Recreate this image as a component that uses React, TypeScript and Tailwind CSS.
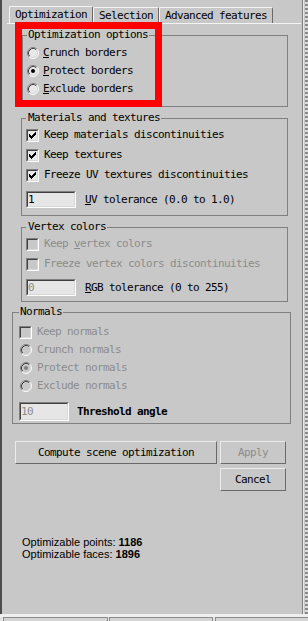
import React from "react";

const F =
  "font-['DejaVu_Sans_Mono','Liberation_Mono',monospace] text-[11px] leading-[12px] tracking-[-0.62px]";

function Radio({ on, disabled }: { on?: boolean; disabled?: boolean }) {
  const fill = disabled ? "#c8c8c8" : "#e8e8e8";
  return (
    <svg width="12" height="12" viewBox="0 0 12 12" className="shrink-0 block">
      <circle cx="6" cy="6" r="5" fill={fill} />
      <path d="M2.11 9.89 A5.5 5.5 0 0 1 9.89 2.11" stroke="#808080" fill="none" />
      <path d="M9.89 2.11 A5.5 5.5 0 0 1 2.11 9.89" stroke="#ffffff" fill="none" />
      <path d="M2.82 9.18 A4.5 4.5 0 0 1 9.18 2.82" stroke="#404040" fill="none" />
      <path d="M9.18 2.82 A4.5 4.5 0 0 1 2.82 9.18" stroke="#d8d8d8" fill="none" />
      {on && <circle cx="6" cy="6" r="2" fill={disabled ? "#808080" : "#000000"} />}
    </svg>
  );
}

function Check({ on, disabled }: { on?: boolean; disabled?: boolean }) {
  const ys = [2, 3, 4, 3, 2, 1, 0];
  return (
    <span className="w-[13px] h-[13px] shrink-0 flex border border-t-[#808080] border-l-[#808080] border-r-white border-b-white">
      <span
        className={
          "flex-1 border border-t-[#404040] border-l-[#404040] border-r-[#d8d8d8] border-b-[#d8d8d8] " +
          (disabled ? "bg-[#c8c8c8]" : "bg-[#e8e8e8]")
        }
      >
        {on && (
          <svg width="9" height="9" viewBox="0 0 9 9" className="block">
            {ys.map((y, i) => (
              <rect key={i} x={1 + i} y={1 + y} width="1" height="3" fill="#000" />
            ))}
          </svg>
        )}
      </span>
    </span>
  );
}

function Field({ value, disabled, h }: { value: string; disabled?: boolean; h: string }) {
  return (
    <div
      className={
        "w-[50px] shrink-0 flex border border-t-[#808080] border-l-[#808080] border-r-white border-b-white " + h
      }
    >
      <div
        className={
          "flex-1 flex items-center border border-t-[#404040] border-l-[#404040] border-r-[#d8d8d8] border-b-[#d8d8d8] bg-[#e6e6e6] " +
          (disabled ? "text-[#8c8c8c]" : "text-black")
        }
      >
        {value}
      </div>
    </div>
  );
}

function Tab({ children, w, selected }: { children: React.ReactNode; w: string; selected?: boolean }) {
  return (
    <div
      className={
        "shrink-0 flex items-center pl-[5px] rounded-t-[2px] border-t border-l border-r border-t-[#f4f4f4] border-l-[#f4f4f4] border-r-[#6a6a6a] bg-[#c8c8c8] " +
        w +
        (selected ? " h-[17px] relative z-10" : " h-[16px]")
      }
    >
      {children}
    </div>
  );
}

function Btn({ children, cls, disabled }: { children: React.ReactNode; cls: string; disabled?: boolean }) {
  return (
    <div
      className={
        "flex items-center justify-center border border-t-[#ececec] border-l-[#ececec] border-b-[#6a6a6a] border-r-[#6a6a6a] " +
        cls +
        (disabled ? " text-[#8c8c8c]" : " text-black")
      }
    >
      {children}
    </div>
  );
}

export default function App() {
  return (
    <div className={"w-[308px] h-[621px] bg-[#c8c8c8] flex flex-col overflow-hidden text-black " + F}>
      <div className="flex h-[614px]">
        <div className="w-[2px] bg-[#4c4c4c]" />
        <div className="relative w-[300px] flex flex-col">
          {/* tabs */}
          <div className="mt-[6px] ml-[7px] flex items-end h-[17px]">
            <Tab w="w-[84px]" selected>
              Optimization
            </Tab>
            <Tab w="w-[66px]">Selection</Tab>
            <Tab w="w-[114px]">Advanced features</Tab>
          </div>
          <div className="ml-[5px] w-[294px] h-px bg-[#f4f4f4]" />

          {/* Optimization options */}
          <fieldset className="mt-[5px] ml-[20px] w-[266px] border border-[#808080] pl-[4px] pt-[3px] pb-[8px]">
            <legend className="pl-[1px] pr-[1px]">Optimization options</legend>
            <div className="flex items-center h-[18px] gap-[4px]">
              <Radio />
              <span>
                <u>C</u>runch borders
              </span>
            </div>
            <div className="flex items-center h-[18px] gap-[4px]">
              <Radio on />
              <span>
                <u>P</u>rotect borders
              </span>
            </div>
            <div className="flex items-center h-[18px] gap-[4px]">
              <Radio />
              <span>
                <u>E</u>xclude borders
              </span>
            </div>
          </fieldset>

          {/* Materials and textures */}
          <fieldset className="mt-[5px] ml-[19px] w-[267px] border border-[#808080] pl-[4px] pt-[1px] pb-[7px]">
            <legend className="pl-[2px] pr-[1px]">Materials and textures</legend>
            <div className="flex items-center h-[20px] gap-[5px]">
              <Check on />
              <span>Keep materials discontinuities</span>
            </div>
            <div className="flex items-center h-[20px] gap-[5px]">
              <Check on />
              <span>Keep textures</span>
            </div>
            <div className="flex items-center h-[20px] gap-[5px]">
              <Check on />
              <span>Freeze UV textures discontinuities</span>
            </div>
            <div className="flex items-center mt-[6px] gap-[9px]">
              <Field value="1" h="h-[17px]" />
              <span>
                <u>U</u>V tolerance (0.0 to 1.0)
              </span>
            </div>
          </fieldset>

          {/* Vertex colors */}
          <fieldset className="mt-[5px] ml-[19px] w-[267px] border border-[#808080] pl-[4px] pt-[1px] pb-[5px]">
            <legend className="pl-[2px] pr-[1px]">Vertex colors</legend>
            <div className="flex items-center h-[20px] gap-[5px] text-[#8c8c8c]">
              <Check disabled />
              <span>
                Keep <u>v</u>ertex colors
              </span>
            </div>
            <div className="flex items-center h-[20px] gap-[5px] text-[#8c8c8c]">
              <Check disabled />
              <span>Freeze vertex colors discontinuities</span>
            </div>
            <div className="flex items-center mt-[5px] gap-[9px]">
              <Field value="0" disabled h="h-[17px]" />
              <span>
                <u>R</u>GB tolerance (0 to 255)
              </span>
            </div>
          </fieldset>

          {/* Normals */}
          <fieldset className="mt-[4px] ml-[10px] w-[279px] border border-[#808080] pl-[6px] pt-[5px] pb-[2px]">
            <legend className="pl-[1px] pr-[1px]">Normals</legend>
            <div className="flex items-center h-[18px] gap-[5px] text-[#8c8c8c]">
              <Check disabled />
              <span>Keep normals</span>
            </div>
            <div className="flex items-center h-[18px] gap-[5px] pl-px text-[#8c8c8c]">
              <Radio disabled />
              <span>Crunch normals</span>
            </div>
            <div className="flex items-center h-[18px] gap-[5px] pl-px text-[#8c8c8c]">
              <Radio on disabled />
              <span>Protect normals</span>
            </div>
            <div className="flex items-center h-[18px] gap-[5px] pl-px text-[#8c8c8c]">
              <Radio disabled />
              <span>Exclude normals</span>
            </div>
            <div className="flex items-center mt-[7px] gap-[8px]">
              <Field value="10" disabled h="h-[19px]" />
              <span className="font-bold">Threshold angle</span>
            </div>
          </fieldset>

          {/* Buttons */}
          <div className="mt-[17px] ml-[13px] flex items-start gap-[3px]">
            <Btn cls="w-[202px] h-[23px]">Compute scene optimization</Btn>
            <div className="flex flex-col gap-[4px]">
              <Btn cls="w-[66px] h-[23px]" disabled>
                Apply
              </Btn>
              <Btn cls="w-[66px] h-[23px]">Cancel</Btn>
            </div>
          </div>

          {/* Stats */}
          <div className="mt-[45px] ml-[20px] font-['Liberation_Sans',Arial,sans-serif] text-[11px] leading-[12px] tracking-normal">
            <div>
              Optimizable points: <b>1186</b>
            </div>
            <div>
              Optimizable faces: <b>1896</b>
            </div>
          </div>

          {/* red annotation */}
          <div className="absolute left-[13px] top-[22px] w-[147px] h-[85px] border-[7px] border-[#ff0000] z-20" />
        </div>
        <div className="w-px bg-[#808080]" />
        <div className="w-px bg-[#e8e8e8]" />
        <div className="w-px" />
        <div className="w-[3px] bg-[image:repeating-linear-gradient(180deg,#8a8a8a_0px,#8a8a8a_2px,#dcdcdc_2px,#dcdcdc_4px)]" />
      </div>
      <div className="h-[7px] flex flex-col">
        <div className="h-[3px] bg-[#efefef]" />
        <div className="flex h-[4px] bg-[#e4e4e4]">
          <div className="w-[3px]" />
          <div className="w-[105px] border-t border-l border-r border-[#8c8c8c] bg-[#d4d4d4]" />
          <div className="w-px" />
          <div className="w-[104px] border-t border-l border-r border-[#8c8c8c] bg-[#d4d4d4]" />
          <div className="w-[2px]" />
          <div className="flex-1 border-t border-l border-[#8c8c8c] bg-[#d4d4d4]" />
        </div>
      </div>
    </div>
  );
}
